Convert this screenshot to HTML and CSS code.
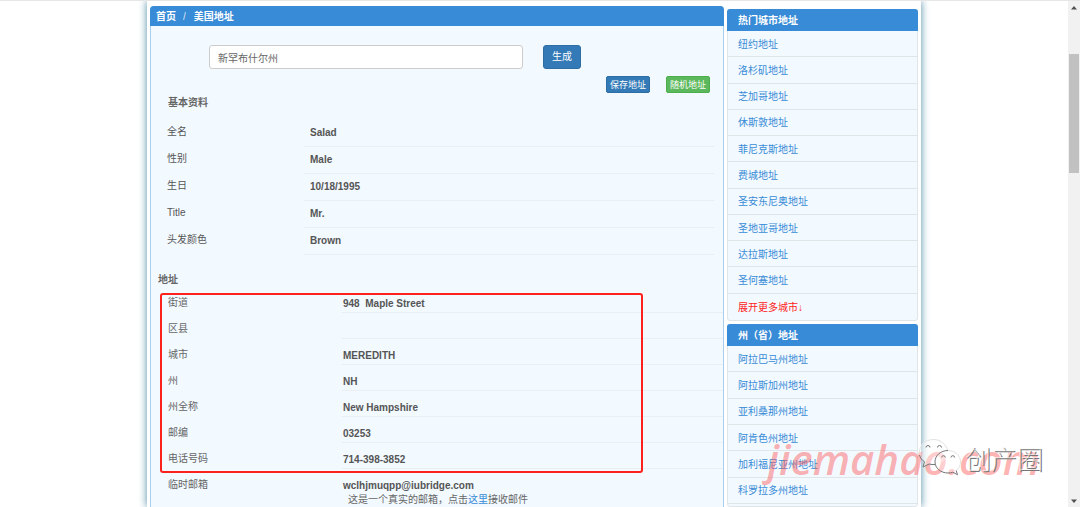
FILE: index.html
```html
<!DOCTYPE html>
<html lang="zh-CN">
<head>
<meta charset="utf-8">
<title>美国地址</title>
<link rel="stylesheet" href="styles.css">
</head>
<body>
<div class="viewport">
  <div class="page">
    <main class="main">
      <nav class="crumbs"><a href="#">首页</a><span class="slash">/</span><span>美国地址</span></nav>
      <form class="search">
        <input class="field" type="text" value="新罕布什尔州" aria-label="州">
        <button class="btn" type="button">生成</button>
      </form>
      <div class="actions">
        <button class="btn small" type="button">保存地址</button>
        <button class="btn small green" type="button">随机地址</button>
      </div>
      <section class="profile">
        <h2>基本资料</h2>
        <dl>
          <div><dt>全名</dt><dd>Salad</dd></div>
          <div><dt>性别</dt><dd>Male</dd></div>
          <div><dt>生日</dt><dd>10/18/1995</dd></div>
          <div><dt>Title</dt><dd>Mr.</dd></div>
          <div><dt>头发颜色</dt><dd>Brown</dd></div>
        </dl>
      </section>
      <section class="address">
        <h2>地址</h2>
        <dl>
          <div><dt>街道</dt><dd>948&nbsp; Maple Street</dd></div>
          <div><dt>区县</dt><dd></dd></div>
          <div><dt>城市</dt><dd>MEREDITH</dd></div>
          <div><dt>州</dt><dd>NH</dd></div>
          <div><dt>州全称</dt><dd>New Hampshire</dd></div>
          <div><dt>邮编</dt><dd>03253</dd></div>
          <div><dt>电话号码</dt><dd>714-398-3852</dd></div>
          <div class="mail"><dt>临时邮箱</dt><dd>wclhjmuqpp@iubridge.com<p>这是一个真实的邮箱，点击<a href="#">这里</a>接收邮件</p></dd></div>
        </dl>
        <div class="marker"></div>
      </section>
    </main>
    <aside class="side">
      <section class="card">
        <h3>热门城市地址</h3>
        <ul class="cities">
          <li><a href="#">纽约地址</a></li>
          <li><a href="#">洛杉矶地址</a></li>
          <li><a href="#">芝加哥地址</a></li>
          <li><a href="#">休斯敦地址</a></li>
          <li><a href="#">菲尼克斯地址</a></li>
          <li><a href="#">费城地址</a></li>
          <li><a href="#">圣安东尼奥地址</a></li>
          <li><a href="#">圣地亚哥地址</a></li>
          <li><a href="#">达拉斯地址</a></li>
          <li><a href="#">圣何塞地址</a></li>
          <li><a class="more" href="#">展开更多城市↓</a></li>
        </ul>
      </section>
      <section class="card grow">
        <h3>州（省）地址</h3>
        <ul class="states">
          <li><a href="#">阿拉巴马州地址</a></li>
          <li><a href="#">阿拉斯加州地址</a></li>
          <li><a href="#">亚利桑那州地址</a></li>
          <li><a href="#">阿肯色州地址</a></li>
          <li><a href="#">加利福尼亚州地址</a></li>
          <li><a href="#">科罗拉多州地址</a></li>
        </ul>
      </section>
    </aside>
  </div>
  <div class="scrollbar">
    <svg width="12" height="12" viewBox="0 0 12 12"><path d="M3 8.500 6 5l3 3.500z"/></svg>
    <div class="thumb"></div>
    <svg width="12" height="12" viewBox="0 0 12 12"><path d="M3 4.500 6 8l3-3.500z"/></svg>
  </div>
</div>
<div class="watermark">jiemahao.com</div>
<div class="account">
  <svg width="44" height="40" viewBox="0 0 44 40">
    <g fill="#fff" fill-opacity=".35">
      <path d="M15.500 1C7.500 1 1 6.700 1 13.800c0 4.200 2 7.700 5.500 10L5 29l6-3c1.500.4 3 .6 4.500.6 8 0 14.500-5.700 14.500-12.800S23.500 1 15.500 1z"/>
      <path d="M30 12.500c-7.200 0-13 5-13 11.300S22.800 35 30 35c1.700 0 3.300-.3 4.800-.8l4.700 2.600-1.300-4.300c3-2 4.800-5.200 4.800-8.700 0-6.300-5.800-11.300-13-11.300z"/>
    </g>
    <path fill="none" stroke="#e2e2e2" d="M1.500 15C1 7 7.500 1.500 15.500 1.500c7 0 12.500 4.500 14 11C37 12.500 42.500 17 42.500 24c0 3.500-1.800 6.500-4.300 8.500"/>
    <path fill="none" stroke="#777" d="M1.500 17c.8 3 2.500 5.200 5 6.800L5 29l6-3c2 .5 4 .7 6 .5M30 12.500c-7.200 0-13 5-13 11.300S22.800 35 30 35c1.700 0 3.300-.3 4.800-.8l4.700 2.600-1.300-4.300M8 9.500a2 2 0 0 1 4 0M19.500 9.500a2 2 0 0 1 4 0M23.700 19.500a1.800 1.800 0 0 1 3.600 0M33 19.500a1.800 1.800 0 0 1 3.600 0"/>
  </svg>
  <span>创产圈</span>
</div>
</body>
</html>
```
FILE: styles.css
```css
* { box-sizing: border-box; }
body, h2, h3, dl, dd, p, ul { margin: 0; padding: 0; }
body {
  height: 100vh;
  overflow: hidden;
  background: #fff;
  color: #555;
  font: 10px/14px "Liberation Sans", "Noto Sans CJK SC", sans-serif;
}
a { color: #388bd6; text-decoration: none; }
h2, h3 { font-size: 10px; line-height: 14px; }
ul { list-style: none; }

.viewport {
  display: flex;
  height: 100vh;
  border-top: 1px solid #e6e6e6;
}
.page {
  display: flex;
  align-items: stretch;
  gap: 3px;
  flex: 0 1 774px;
  min-width: 0;
  margin: 0 auto;
  padding: 5px 3px 0;
  box-shadow: 0 0 8px #4d8ba6;
  clip-path: inset(0 -10px);
}

.main {
  flex: 1;
  min-width: 0;
  border: 1px solid #a9cdec;
  border-bottom: 0;
  border-radius: 4px 4px 0 0;
  background: #f2f9ff;
}
.crumbs {
  display: flex;
  margin: -1px -1px 0;
  padding: 4px 6px 2px;
  border-radius: 4px 4px 0 0;
  background: #388bd6;
  color: #fff;
  font-weight: bold;
}
.crumbs a { color: #fff; }
.slash { margin: 0 8px 0 7px; font-weight: normal; opacity: .8; }

.search {
  display: flex;
  gap: 20px;
  margin: 19px 142px 0 58px;
}
.field {
  flex: 1;
  min-width: 0;
  height: 24px;
  padding: 0 8px;
  border: 1px solid #ccc;
  border-radius: 3px;
  background: #fff;
  color: #666;
  font: inherit;
}
.btn {
  height: 24px;
  padding: 0 8px;
  border: 1px solid #2e6da4;
  border-radius: 3px;
  background: #337ab7;
  color: #fff;
  font: inherit;
}
.actions {
  display: flex;
  justify-content: flex-end;
  gap: 16px;
  margin: 7px 13px 0 0;
}
.small {
  height: 17px;
  padding: 0 3px;
  border-radius: 2px;
  font-size: 9px;
  line-height: 14px;
}
.green { border-color: #4cae4c; background: #5cb85c; }
.search .btn { width: 38px; }

dl > div { display: flex; }
dd { flex: 1; font-weight: bold; }

.profile { padding: 3px 9px 0 16px; }
.profile h2 { padding-left: 1px; color: #666; }
.profile dl { padding-top: 10px; }
.profile dl > div { height: 27px; }
.profile dt { width: 137px; padding-top: 5px; }
.profile dd { padding: 6px 6px 0; border-bottom: 1px solid #e9eff3; }

.address { position: relative; padding-top: 18px; }
.address h2 { padding-left: 7px; color: #666; }
.address dl { padding-left: 17px; }
.address dl > div { height: 26px; }
.address dt { width: 174px; padding-top: 9px; color: #666; }
.address dd { padding: 10px 1px 0; border-bottom: 1px solid #e9eff3; }
.address .mail { height: 46px; }
.mail dd { border: 0; }
.mail p { padding-left: 5px; font-weight: normal; color: #666; }
.marker {
  position: absolute;
  top: 38px;
  left: 9px;
  width: 483px;
  height: 180px;
  border: 2px solid #fc221b;
  border-radius: 3px;
}

.side {
  display: flex;
  flex-direction: column;
  gap: 3px;
  flex: 0 0 191px;
  padding-top: 3px;
}
.card {
  border: 1px solid #e0e5e8;
  border-radius: 3px;
  background: #f2f9ff;
}
.card.grow { flex: 1; }
.card h3 {
  margin: -1px -1px 0;
  padding: 5px 11px 3px;
  border-radius: 3px 3px 0 0;
  background: #388bd6;
  color: #fff;
}
.card ul { display: grid; grid-auto-rows: 1fr; }
.cities { min-height: 289px; }
.states { min-height: 158px; }
.card li {
  display: flex;
  align-items: center;
  padding: 2px 10px 0;
  border-bottom: 1px solid #e0e5e8;
}
.cities li:last-child { border: 0; }
.more { color: #ff2222; }

.scrollbar {
  display: flex;
  flex-direction: column;
  flex: 0 0 12px;
  background: #f1f1f1;
}
.scrollbar svg { fill: #505050; }
.scrollbar svg:last-child { margin-top: auto; }
.thumb {
  height: 119px;
  margin: 41px 1px 0;
  background: #c1c1c1;
}

.watermark {
  position: absolute;
  right: 40px;
  bottom: 20px;
  color: rgba(255, 85, 85, .45);
  font: italic 600 42px/56px "Open Sans", sans-serif;
}
.account {
  position: absolute;
  right: 37px;
  bottom: 29px;
  display: flex;
  align-items: center;
  gap: 3px;
  color: rgba(255, 255, 255, .6);
  font: 300 26px/40px "Noto Sans CJK SC", sans-serif;
  text-shadow: 1px 1px 0 #777;
}
```
